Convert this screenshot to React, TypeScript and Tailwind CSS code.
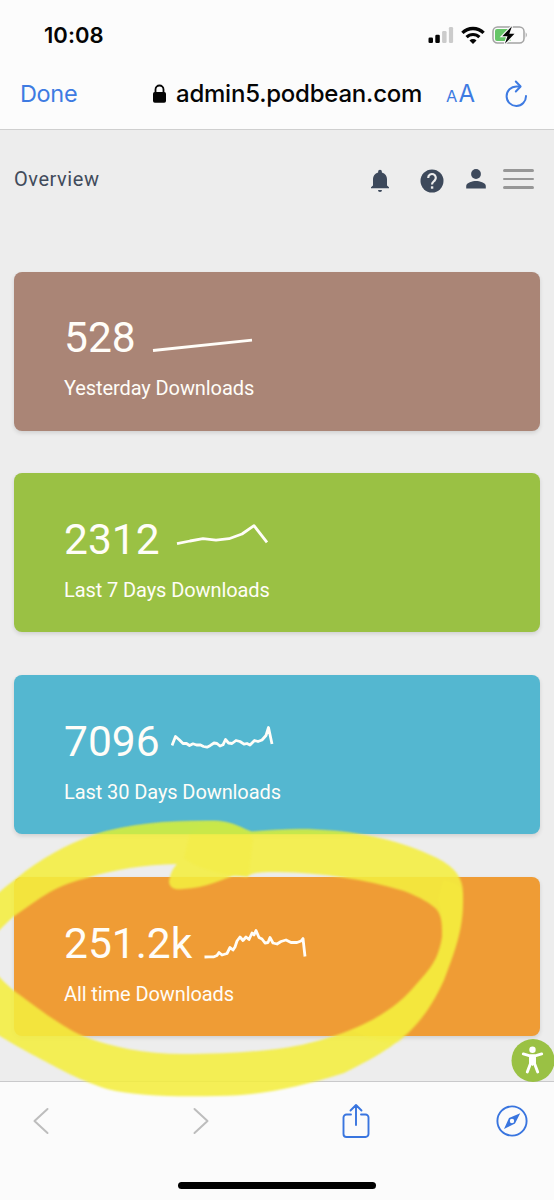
import React from 'react';

interface StatCard {
  value: string;
  label: string;
  card: string;
  valueClass: string;
  chartWidth: number;
  chartClass: string;
  points: string;
}

// Sparkline points are in pixels, inside a 40px high box
const stats: StatCard[] = [
  {
    value: '528',
    label: 'Yesterday Downloads',
    card: 'bg-[#aa8576]',
    valueClass: 'w-[70px]',
    chartWidth: 102,
    chartClass: 'ml-[17px] mt-[5px]',
    points: '2,30.5 101,20.2',
  },
  {
    value: '2312',
    label: 'Last 7 Days Downloads',
    card: 'bg-[#9ac144]',
    valueClass: 'w-[95px]',
    chartWidth: 94,
    chartClass: 'ml-4 mt-1',
    points: '2,21.7 15,19 28,16.7 41,18.2 54,16.7 67,12 79,3.7 92,20.3',
  },
  {
    value: '7096',
    label: 'Last 30 Days Downloads',
    card: 'bg-[#54b7d0]',
    valueClass: 'w-[95px]',
    chartWidth: 106,
    chartClass: 'ml-3 mt-[3px]',
    points:
      '1,22.5 4.5,13.5 8.5,17 12,20.5 15.5,20.5 18.5,22.5 22,20.8 25.5,22 29,21.8 32.5,23.5 36,24.2 39,22.7 43,20 46,20.5 49,23 52,21.8 54.5,16.5 57.5,20 61,20.5 65,17.5 69,18.5 73,21.2 76,20.5 79,22 83.5,17.5 87,18.5 91,17 95,12.5 97.500,4.5 101,21',
  },
  {
    value: '251.2k',
    label: 'All time Downloads',
    card: 'bg-[#ef9c35]',
    valueClass: 'w-[128px]',
    chartWidth: 104,
    chartClass: 'ml-3 mt-[3px]',
    points:
      '0.5,32 5,31.8 10,31.8 13,30.5 15,27.5 18,30 23,28.5 26,22.5 29,25 31,22 33,16 36,12 39,15.5 42,12 45,14.5 48,8 50,10 52,5.5 55,12.5 58,14 61,18 64,17.5 66,12.5 69,18 73,19 77,16.5 82,15 87,17.5 93,17.5 97,16 99,13.5 101,31.5',
  },
];

const StatusBar = () => (
  <div className="flex h-[69px] items-center justify-between pl-[44px] pr-[26px] pt-px">
    <span className="font-['Inter',sans-serif] text-[22px] font-semibold tracking-[0.05px]">10:08</span>
    <div className="flex items-center">
      <svg width="26" height="18" viewBox="0 0 26 18" className="mr-[7px]">
        <rect x="0.5" y="11.5" width="4.5" height="5.5" rx="1.3" fill="#050505" />
        <rect x="7.3" y="8.7" width="4.5" height="8.3" rx="1.3" fill="#050505" />
        <rect x="14.1" y="5" width="4.5" height="12" rx="1.3" fill="#cbcbcb" />
        <rect x="20.9" y="1" width="4.2" height="16" rx="1.3" fill="#cbcbcb" />
      </svg>
      <svg width="24" height="18" viewBox="0 0 24 18" className="mr-[7px]">
        <path d="M1.400 6.900a15 15 0 0 1 21.200 0" fill="none" stroke="#050505" strokeWidth="3.3" />
        <path d="M5.600 11.100a9 9 0 0 1 12.800 0" fill="none" stroke="#050505" strokeWidth="3.1" />
        <path d="M12 17.900L8.500 14.400a5 5 0 0 1 7 0z" fill="#050505" />
      </svg>
      <svg width="36" height="20" viewBox="0 0 36 20">
        <rect x="1" y="2" width="31" height="16" rx="4.5" fill="none" stroke="#a3a3a3" strokeWidth="1.5" />
        <path d="M33.7 7.3q2.2 2.7 0 5.4z" fill="#a3a3a3" />
        <path d="M5 4h13.5v12H5a2 2 0 0 1-2-2V6a2 2 0 0 1 2-2z" fill="#66c668" />
        <path d="M20 1.200L10.300 11.200h5.200L12.900 18.800 22.500 8.800h-5.200z" fill="#050505" stroke="#fcfcfc" strokeWidth="2.2" paintOrder="stroke" />
      </svg>
    </div>
  </div>
);

const AddressBar = () => (
  <div className="flex h-[60px] items-center pb-[11px] pl-5 pr-[26px] font-['Inter',sans-serif]">
    <span className="w-[132px] text-[23.5px] tracking-[-0.35px] text-[#3e7be2]">Done</span>
    <svg width="15" height="20" viewBox="0 0 15 20" className="mr-[9px]">
      <path d="M3.500 9V5.500a4 4 0 0 1 8 0v3.500" fill="none" stroke="#050505" strokeWidth="1.8" />
      <rect x="1" y="8" width="13" height="10.800" rx="1.8" fill="#050505" />
    </svg>
    <span className="w-[246px] whitespace-nowrap text-[24px] font-medium tracking-[-0.22px]">admin5.podbean.com</span>
    <span className="ml-6 flex items-baseline gap-px text-[#3e7be2]">
      <span className="text-[16.5px] leading-none">A</span>
      <span className="text-[24px] leading-none">A</span>
    </span>
    <svg width="24" height="28" viewBox="0 0 24 28" fill="none" stroke="#3e7be2" strokeWidth="2" strokeLinecap="round" strokeLinejoin="round" className="ml-auto">
      <path d="M16 6.500H12.400A9.700 9.700 0 1 0 22 16" />
      <path d="M11.800 1.500L16.600 6.500 11.800 11.500" />
    </svg>
  </div>
);

const PageHeader = () => (
  <div className="flex h-[141.600px] items-start justify-between pl-3.5 pr-5 pt-[35px]">
    <h1 className="font-['Roboto',sans-serif] text-[20px] leading-7 tracking-[0.55px] text-[#414b5b]">Overview</h1>
    <div className="flex items-center">
      <svg width="20" height="24" viewBox="0 0 20 24" fill="#3d495b" className="mr-[30px] mt-1">
        <path d="M10 .8a1.900 1.900 0 0 0-1.900 1.900v.7C4.800 4.200 3 7 3 10v6.500L1 18.300v1h18v-1L17 16.500V10c0-3-1.800-5.800-5.100-6.600v-.7A1.900 1.900 0 0 0 10 .8z" />
        <path d="M8 21h4a2 2 0 0 1-4 0z" />
      </svg>
      <svg width="24" height="24" viewBox="0 0 24 24" className="mr-[22px] mt-1">
        <circle cx="12" cy="12" r="11.5" fill="#3d495b" />
        <path d="M8.200 8.900a3.800 3.800 0 1 1 6.400 2.700c-1.300 1.200-2.600 1.700-2.600 3.900" fill="none" stroke="#ededed" strokeWidth="2.200" />
        <rect x="10.900" y="17.300" width="2.400" height="2.400" fill="#ededed" />
      </svg>
      <svg width="20" height="22" viewBox="0 0 20 22" fill="#3d495b" className="mr-[17px]">
        <circle cx="10" cy="6" r="4.900" />
        <path d="M.2 20.500v-2.500c0-3.200 6.500-4.900 9.800-4.900s9.800 1.700 9.800 4.900v2.500z" />
      </svg>
      <div className="flex w-[31px] flex-col gap-[5.800px]">
        <div className="h-[2.700px] rounded-full bg-[#979797]"></div>
        <div className="h-[2.700px] rounded-full bg-[#979797]"></div>
        <div className="h-[2.700px] rounded-full bg-[#979797]"></div>
      </div>
    </div>
  </div>
);

const DownloadsCard = ({ stat }: { stat: StatCard }) => (
  <div className={`h-[159px] rounded-lg pl-[50px] pt-[42.400px] text-[#fffdf8] shadow-[0_2px_4px_rgba(0,0,0,0.12)] font-['Roboto',sans-serif] ${stat.card}`}>
    <div className="flex h-12 items-center">
      <span className={`whitespace-nowrap text-[42.500px] leading-[48px] ${stat.valueClass}`}>{stat.value}</span>
      <svg width={stat.chartWidth} height="40" viewBox={`0 0 ${stat.chartWidth} 40`} className={stat.chartClass}>
        <polyline points={stat.points} fill="none" stroke="#fffdf8" strokeWidth="2.800" strokeLinejoin="round" />
      </svg>
    </div>
    <p className="mt-3.5 text-[20px] leading-6 tracking-[-0.090px]">{stat.label}</p>
  </div>
);

// Freehand marker circle that lies over the last card
const MarkerCircle = () => (
  <svg className="pointer-events-none absolute left-0 top-0" width="554" height="1200" viewBox="0 0 554 1200">
    <defs>
      <filter id="soft" x="-5%" y="-5%" width="110%" height="110%">
        <feGaussianBlur stdDeviation="1.1" />
      </filter>
      <clipPath id="blueCard">
        <rect x="14" y="675" width="526" height="159.200" />
      </clipPath>
    </defs>
    <g filter="url(#soft)" fill="#f4ee3f">
      <path
        fillRule="evenodd"
        opacity="0.88"
        d="M-14 905 C-6 896 4 888 17 878 C40 859 65 845 93 835 C130 824 165 821 207 821 C232 820 242 829 252 832 C275 830 296 829 317 830 C365 832 402 841 437 858 C455 867 463 878 463 893 C464 924 458 944 444 980 C420 1033 390 1050 344 1073 C300 1087 258 1096 217 1096 C175 1097 135 1096 107 1089 C73 1078 55 1066 33 1055 C18 1047 4 1038 -14 1028 Z
           M-14 948 C-8 937 2 927 13 917 C26 908 38 899 50 892 C63 885 74 881 87 878 C115 869 144 865 177 864 C172 869 170 875 169 882 C170 888 174 890 183 889 C207 888 222 879 233 876 C240 875 245 877 247 877 C252 874 251 872 277 872 C325 873 363 879 404 891 C422 898 429 903 434 907 C443 914 442 928 442 937 C438 960 431 968 414 987 C393 1011 366 1025 337 1035 C310 1044 292 1047 277 1049 C244 1053 216 1054 183 1054 C145 1054 111 1047 83 1036 C60 1026 34 1005 17 993 C9 987 0 978 -14 962 Z"
      />
      <path opacity="0.35" d="M190 832 C205 823 220 823 230 824 C242 829 252 834 253 840 L249 874 C244 877 240 877 233 876 C214 872 196 868 184 858 Z" />
      <path opacity="0.3" d="M443 880 C457 882 463 888 463 896 C464 924 458 944 444 980 C430 1012 414 1030 398 1043 C375 1042 365 1036 350 1030 C374 1021 396 1009 414 987 C431 968 442 957 442 937 C442 926 443 914 438 900 Z" />
    </g>
    {/* the ink turns green where it crosses the blue card */}
    <g clipPath="url(#blueCard)">
      <path
        filter="url(#soft)"
        fill="#b9e84c"
        opacity="0.65"
        d="M90 836 C130 824 165 821 207 821 C232 820 242 829 252 832 C275 830 296 829 317 830 C335 831 352 833 364 836 Z"
      />
    </g>
  </svg>
);

const BottomBar = () => (
  <div className="flex grow flex-col border-t border-[#c9c9cb] bg-[#fbfbfb]">
    <div className="flex h-[77px] items-center justify-between pl-[33px] pr-[26px]">
      <svg width="16" height="28" viewBox="0 0 16 28" fill="none" stroke="#bdbdbd" strokeWidth="2" strokeLinecap="round" strokeLinejoin="round">
        <path d="M14.500 2L1.500 14l13 12" />
      </svg>
      <svg width="16" height="28" viewBox="0 0 16 28" fill="none" stroke="#bdbdbd" strokeWidth="2" strokeLinecap="round" strokeLinejoin="round" className="ml-[18px]">
        <path d="M1.500 2l13 12-13 12" />
      </svg>
      <svg width="28" height="36" viewBox="0 0 28 36" fill="none" stroke="#3975df" strokeWidth="1.900" strokeLinecap="round" strokeLinejoin="round" className="ml-[6px]">
        <path d="M9 11.500H4.500A3 3 0 0 0 1.500 14.500V31a3 3 0 0 0 3 3h19a3 3 0 0 0 3-3V14.500a3 3 0 0 0-3-3H19M14 22V2M8.500 7.500L14 2l5.500 5.500" />
      </svg>
      <svg width="32" height="32" viewBox="0 0 32 32">
        <circle cx="16" cy="16" r="14.600" fill="none" stroke="#3975df" strokeWidth="1.900" />
        <path fillRule="evenodd" d="M24.200 8.300L19 18.600 8 24l5-11zM16 13.800a2.200 2.200 0 1 0 0 4.400 2.200 2.200 0 0 0 0-4.400z" fill="#3975df" />
      </svg>
    </div>
    <div className="mx-auto mt-[23px] h-[7px] w-[198px] rounded-full bg-black"></div>
  </div>
);

const App = () => {
  return (
    <div className="relative flex h-[1200px] w-[554px] flex-col overflow-hidden bg-[#ededed] text-[#050505]">
      <div className="h-[130px] shrink-0 border-b border-[#cfcfcf] bg-[#fcfcfc]">
        <StatusBar />
        <AddressBar />
      </div>

      {/* Dashboard */}
      <main className="h-[951px] shrink-0">
        <PageHeader />
        <div className="flex flex-col gap-[42.900px] px-3.5">
          {stats.map((stat) => (
            <DownloadsCard key={stat.label} stat={stat} />
          ))}
        </div>
      </main>

      <BottomBar />
      <MarkerCircle />

      {/* Accessibility button */}
      <button className="absolute left-[511px] top-[1039px]" aria-label="Accessibility">
        <svg width="44" height="44" viewBox="0 0 44 44">
          <circle cx="22" cy="21.500" r="21.500" fill="#9ac144" />
          <circle cx="21.500" cy="10.700" r="3.200" fill="#fff" />
          <path d="M12.300 14.900L19 16.800h5l6.700-1.900M19.500 17.500v7l-3.200 8.500M23.500 17.500v7l3.200 8.500" fill="none" stroke="#fff" strokeWidth="2.900" strokeLinecap="round" strokeLinejoin="round" />
          <path d="M18.500 16h6v8.500l-3 2.500-3-2.500z" fill="#fff" />
        </svg>
      </button>
    </div>
  );
};

export default App;
